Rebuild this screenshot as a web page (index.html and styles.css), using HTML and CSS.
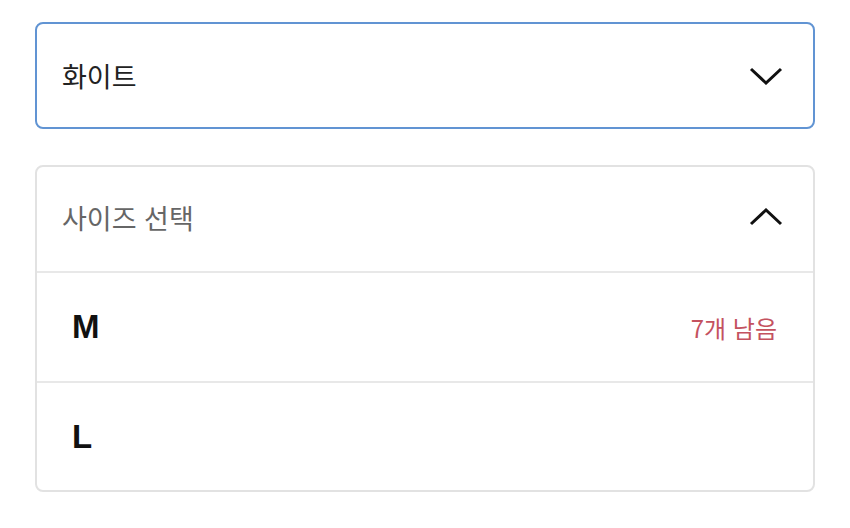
FILE: index.html
```html
<!DOCTYPE html>
<html lang="ko">
  <head>
    <meta charset="UTF-8" />
    <meta name="viewport" content="width=device-width, initial-scale=1.0" />
    <title>옵션 선택</title>
    <link rel="stylesheet" href="styles.css">
  </head>
  <body>
    <div class="options">
      <!-- Color select -->
      <div class="select select-active">
        <div class="select-head">
          <span class="select-value">화이트</span>
          <svg class="chevron" width="34" height="18" viewBox="0 0 34 18">
            <polyline points="2,2 17,16 32,2" />
          </svg>
        </div>
      </div>

      <!-- Size select -->
      <div class="select select-open">
        <div class="select-head">
          <span class="select-placeholder">사이즈 선택</span>
          <svg class="chevron" width="34" height="18" viewBox="0 0 34 18">
            <polyline points="2,16 17,2 32,16" />
          </svg>
        </div>
        <div class="option">
          <span class="option-name">M</span>
          <span class="option-stock">7개 남음</span>
        </div>
        <div class="option">
          <span class="option-name">L</span>
        </div>
      </div>
    </div>
  </body>
</html>
```

FILE: styles.css
```css
body {
  font-family: "Noto Sans CJK KR", "Noto Sans", sans-serif;
  margin: 0;
  padding: 0;
  background-color: #fff;
}

.options {
  display: flex;
  flex-direction: column;
  gap: 36px;
  padding: 22px 35px;
}

/* Select boxes */
.select {
  border: 2px solid #e2e2e2;
  border-radius: 8px;
  background-color: #fff;
}

.select-active {
  border-color: #6194d3;
}

.select-head {
  display: flex;
  align-items: center;
  justify-content: space-between;
  height: 103px;
  padding: 0 30px 0 25px;
}

.select-open .select-head {
  height: 106px;
  padding-bottom: 4px;
  box-sizing: border-box;
  border-bottom: 2px solid #e8e8e8;
}

.select-value {
  font-size: 27px;
  color: #222;
}

.select-placeholder {
  font-size: 27px;
  color: #666;
}

.chevron {
  fill: none;
  stroke: #111;
  stroke-width: 3;
}

/* Option rows */
.option {
  display: flex;
  align-items: center;
  justify-content: space-between;
  height: 108px;
  padding: 0 36px 0 35px;
}

.option + .option {
  border-top: 2px solid #e8e8e8;
  height: 107px;
}

.option-name {
  font-family: "Liberation Sans", Arial, sans-serif;
  font-weight: bold;
  font-size: 33px;
  color: #111;
}

.option-stock {
  font-size: 24px;
  color: #c4525f;
}
```
